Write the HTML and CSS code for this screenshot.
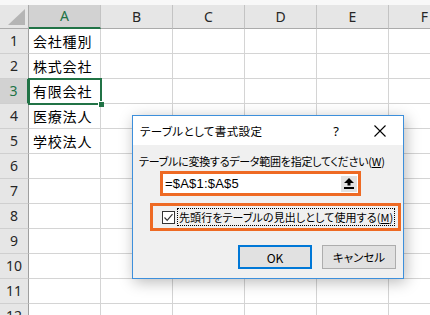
FILE: index.html
```html
<!DOCTYPE html>
<html lang="ja">
<head>
<meta charset="utf-8">
<link rel="stylesheet" href="styles.css">
</head>
<body>
<div class="sheet">
  <div class="corner"><svg class="tri" width="17" height="16" viewBox="0 0 17 16"><polygon points="17,0 17,16 0,16" fill="#b5b5b5"/></svg></div>
  <div class="ch sel">A</div><div class="ch">B</div><div class="ch">C</div><div class="ch">D</div><div class="ch">E</div><div class="ch">F</div>

  <div class="rh">1</div><div class="c">会社種別</div><div class="c"></div><div class="c"></div><div class="c"></div><div class="c"></div><div class="c"></div>
  <div class="rh">2</div><div class="c">株式会社</div><div class="c"></div><div class="c"></div><div class="c"></div><div class="c"></div><div class="c"></div>
  <div class="rh selr">3</div><div class="c">有限会社</div><div class="c"></div><div class="c"></div><div class="c"></div><div class="c"></div><div class="c"></div>
  <div class="rh">4</div><div class="c">医療法人</div><div class="c"></div><div class="c"></div><div class="c"></div><div class="c"></div><div class="c"></div>
  <div class="rh">5</div><div class="c">学校法人</div><div class="c"></div><div class="c"></div><div class="c"></div><div class="c"></div><div class="c"></div>
  <div class="rh">6</div><div class="c"></div><div class="c"></div><div class="c"></div><div class="c"></div><div class="c"></div><div class="c"></div>
  <div class="rh">7</div><div class="c"></div><div class="c"></div><div class="c"></div><div class="c"></div><div class="c"></div><div class="c"></div>
  <div class="rh">8</div><div class="c"></div><div class="c"></div><div class="c"></div><div class="c"></div><div class="c"></div><div class="c"></div>
  <div class="rh">9</div><div class="c"></div><div class="c"></div><div class="c"></div><div class="c"></div><div class="c"></div><div class="c"></div>
  <div class="rh">10</div><div class="c"></div><div class="c"></div><div class="c"></div><div class="c"></div><div class="c"></div><div class="c"></div>
  <div class="rh">11</div><div class="c"></div><div class="c"></div><div class="c"></div><div class="c"></div><div class="c"></div><div class="c"></div>
  <div class="rh">12</div><div class="c"></div><div class="c"></div><div class="c"></div><div class="c"></div><div class="c"></div><div class="c"></div>
</div>

<div class="selbox"></div>
<div class="handle"></div>

<div class="dialog">
  <div class="titlebar">
    <span class="title">テーブルとして書式設定</span>
    <span class="help">?</span>
    <svg class="close" width="12" height="12" viewBox="0 0 12 12"><path d="M0.5 0.5 L11.5 11.5 M11.5 0.5 L0.5 11.5" stroke="#000" stroke-width="1.1" fill="none"/></svg>
  </div>
  <div class="dbody">
    <div class="label">テーブルに変換するデータ範囲を指定してください(<span class="u">W</span>)</div>
    <div class="range">
      <span class="val">=$A$1:$A$5</span>
      <span class="rbtn"><svg width="10" height="11" viewBox="0 0 10 11"><polygon points="5,0 10,5 6.5,5 6.5,7.5 3.5,7.5 3.5,5 0,5" fill="#000"/><rect x="0" y="9" width="10" height="2" fill="#000"/></svg></span>
    </div>
    <div class="chkrow">
      <span class="box"><svg width="11" height="11" viewBox="0 0 11 11"><polyline points="1.5,5.5 4.2,8.3 9.5,2.2" fill="none" stroke="#333" stroke-width="1.2"/></svg></span>
      <span class="focus">先頭行をテーブルの見出しとして使用する(<span class="u">M</span>)</span>
    </div>
    <div class="btns">
      <div class="btn def">OK</div>
      <div class="btn">キャンセル</div>
    </div>
  </div>
</div>
</body>
</html>
```

FILE: styles.css
```css
body {
  margin: 0;
  width: 430px;
  height: 315px;
  overflow: hidden;
  position: relative;
  background: #f8f8f8;
  font-family: "Noto Sans CJK JP", sans-serif;
}

.sheet {
  margin-top: 5px;
  display: grid;
  grid-template-columns: 29px repeat(6, 72px);
  grid-template-rows: 24px;
  grid-auto-rows: 25px;
  width: 461px;
}

.corner {
  background: #e6e6e6;
  border-right: 1px solid #ababab;
  border-bottom: 1px solid #ababab;
  box-sizing: border-box;
  display: flex;
  align-items: flex-end;
  justify-content: flex-end;
  padding: 0 3px 3px 0;
}

.ch {
  background: #e6e6e6;
  border-right: 1px solid #c3c3c3;
  border-bottom: 1px solid #ababab;
  box-sizing: border-box;
  text-align: center;
  font-family: "Noto Sans", "Liberation Sans", sans-serif;
  font-size: 14px;
  line-height: 23px;
  color: #262626;
}

.ch.sel {
  background: #d2d2d2;
  color: #217346;
  border-bottom: 2px solid #217346;
  line-height: 22px;
}

.rh {
  background: #e6e6e6;
  border-right: 1px solid #9f9f9f;
  border-bottom: 1px solid #cfcfcf;
  box-sizing: border-box;
  text-align: center;
  font-family: "Noto Sans", "Liberation Sans", sans-serif;
  font-size: 14px;
  line-height: 24px;
  color: #262626;
}

.rh.selr {
  background: #d2d2d2;
  color: #217346;
  border-right: 2px solid #217346;
}

.c {
  background: #fff;
  border-right: 1px solid #d4d4d4;
  border-bottom: 1px solid #d4d4d4;
  box-sizing: border-box;
  font-size: 14px;
  letter-spacing: 0.8px;
  padding-left: 4px;
  line-height: 24px;
  color: #000;
  white-space: nowrap;
}

.selbox {
  position: absolute;
  left: 28px;
  top: 78px;
  width: 74px;
  height: 27px;
  box-sizing: border-box;
  border: 2px solid #217346;
}

.handle {
  position: absolute;
  left: 98px;
  top: 101px;
  width: 6px;
  height: 6px;
  background: #217346;
  border: 1px solid #fff;
  border-width: 1px 0 0 1px;
  box-sizing: border-box;
}

.dialog {
  position: absolute;
  left: 132px;
  top: 115px;
  width: 272px;
  height: 164px;
  box-sizing: border-box;
  border: 1px solid #3d8fdb;
  background: #f0f0f0;
  box-shadow: 2px 3px 14px rgba(0, 0, 0, 0.28);
  display: flex;
  flex-direction: column;
  font-feature-settings: "palt";
  font-size: 11px;
  color: #000;
}

.titlebar {
  height: 29px;
  background: #fff;
  display: flex;
  align-items: center;
  padding-left: 7px;
  padding-right: 17px;
}

.title {
  flex: 1;
  white-space: nowrap;
  letter-spacing: 0.4px;
  font-size: 11.5px;
}

.help {
  width: 14px;
  text-align: center;
  margin-right: 31px;
  font-family: "Noto Sans", sans-serif;
  font-size: 13px;
}

.close {
  display: block;
  margin-top: 1px;
}

.dbody {
  flex: 1;
  display: flex;
  flex-direction: column;
}

.label {
  margin: 8px 0 0 6px;
  line-height: 16px;
  white-space: nowrap;
  letter-spacing: -0.25px;
}

.u {
  text-decoration: underline;
}

.range {
  margin: 2px 0 0 27px;
  width: 201px;
  height: 25px;
  box-sizing: border-box;
  border: 3px solid #ee6a24;
  background: #fff;
  display: flex;
  align-items: center;
}

.val {
  flex: 1;
  padding-left: 2px;
  font-family: "Liberation Sans", sans-serif;
  font-size: 13px;
  letter-spacing: 0.2px;
}

.rbtn {
  width: 16px;
  height: 16px;
  margin-right: 1px;
  background: #e1e1e1;
  display: flex;
  align-items: center;
  justify-content: center;
}

.chkrow {
  margin: 7px 0 0 17px;
  width: 251px;
  height: 28px;
  box-sizing: border-box;
  border: 3px solid #ee6a24;
  display: flex;
  align-items: center;
  padding-left: 9px;
}

.box {
  width: 13px;
  height: 13px;
  box-sizing: border-box;
  border: 1px solid #333;
  background: #fff;
  display: flex;
  align-items: center;
  justify-content: center;
  flex: none;
}

.focus {
  margin-left: 2px;
  border: 1px dotted #000;
  padding: 0 1px;
  line-height: 16px;
  white-space: nowrap;
  letter-spacing: 0.1px;
}

.btns {
  margin-top: 14px;
  display: flex;
  justify-content: flex-end;
  gap: 10px;
  padding-right: 7px;
}

.btn {
  width: 74px;
  height: 24px;
  box-sizing: border-box;
  background: #e1e1e1;
  border: 1px solid #adadad;
  display: flex;
  align-items: center;
  justify-content: center;
  font-size: 11.5px;
}

.btn.def {
  border: 2px solid #0078d7;
  font-size: 12px;
}
```
